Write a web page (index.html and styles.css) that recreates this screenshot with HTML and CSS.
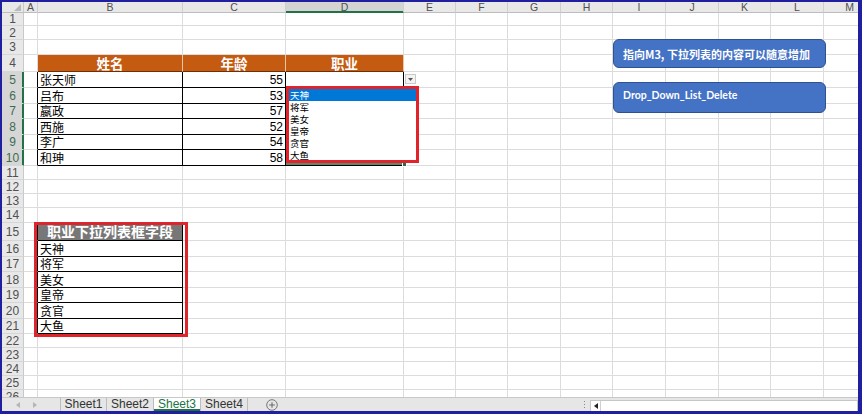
FILE: index.html
```html
<!DOCTYPE html>
<html lang="zh">
<head>
<meta charset="utf-8">
<title>Sheet3</title>
<link rel="stylesheet" href="styles.css">
</head>
<body>
<div class="frame">
  <div class="sheet">
    <div class="grid">
      <div class="corner"></div><div class="ch">A</div><div class="ch">B</div><div class="ch">C</div><div class="ch sel">D</div><div class="ch">E</div><div class="ch">F</div><div class="ch">G</div><div class="ch">H</div><div class="ch">I</div><div class="ch">J</div><div class="ch">K</div><div class="ch">L</div><div class="ch">M</div>
      <div class="rh">1</div><div class="c"></div><div class="c"></div><div class="c"></div><div class="c"></div><div class="c"></div><div class="c"></div><div class="c"></div><div class="c"></div><div class="c"></div><div class="c"></div><div class="c"></div><div class="c"></div><div class="c"></div>
      <div class="rh">2</div><div class="c"></div><div class="c"></div><div class="c"></div><div class="c"></div><div class="c"></div><div class="c"></div><div class="c"></div><div class="c"></div><div class="c"></div><div class="c"></div><div class="c"></div><div class="c"></div><div class="c"></div>
      <div class="rh">3</div><div class="c"></div><div class="c"></div><div class="c"></div><div class="c"></div><div class="c"></div><div class="c"></div><div class="c"></div><div class="c"></div><div class="c"></div><div class="c"></div><div class="c"></div><div class="c"></div><div class="c"></div>
      <div class="rh">4</div><div class="c"></div><div class="c th">姓名</div><div class="c th">年龄</div><div class="c th">职业</div><div class="c"></div><div class="c"></div><div class="c"></div><div class="c"></div><div class="c"></div><div class="c"></div><div class="c"></div><div class="c"></div><div class="c"></div>
      <div class="rh sel">5</div><div class="c edge"></div><div class="c d">张天师</div><div class="c d num">55</div><div class="c d"></div><div class="c"></div><div class="c"></div><div class="c"></div><div class="c"></div><div class="c"></div><div class="c"></div><div class="c"></div><div class="c"></div><div class="c"></div>
      <div class="rh sel">6</div><div class="c edge"></div><div class="c d">吕布</div><div class="c d num">53</div><div class="c d"></div><div class="c"></div><div class="c"></div><div class="c"></div><div class="c"></div><div class="c"></div><div class="c"></div><div class="c"></div><div class="c"></div><div class="c"></div>
      <div class="rh sel">7</div><div class="c edge"></div><div class="c d">嬴政</div><div class="c d num">57</div><div class="c d"></div><div class="c"></div><div class="c"></div><div class="c"></div><div class="c"></div><div class="c"></div><div class="c"></div><div class="c"></div><div class="c"></div><div class="c"></div>
      <div class="rh sel">8</div><div class="c edge"></div><div class="c d">西施</div><div class="c d num">52</div><div class="c d"></div><div class="c"></div><div class="c"></div><div class="c"></div><div class="c"></div><div class="c"></div><div class="c"></div><div class="c"></div><div class="c"></div><div class="c"></div>
      <div class="rh sel">9</div><div class="c edge"></div><div class="c d">李广</div><div class="c d num">54</div><div class="c d"></div><div class="c"></div><div class="c"></div><div class="c"></div><div class="c"></div><div class="c"></div><div class="c"></div><div class="c"></div><div class="c"></div><div class="c"></div>
      <div class="rh sel">10</div><div class="c edge"></div><div class="c d">和珅</div><div class="c d num">58</div><div class="c d"></div><div class="c"></div><div class="c"></div><div class="c"></div><div class="c"></div><div class="c"></div><div class="c"></div><div class="c"></div><div class="c"></div><div class="c"></div>
      <div class="rh">11</div><div class="c"></div><div class="c"></div><div class="c"></div><div class="c"></div><div class="c"></div><div class="c"></div><div class="c"></div><div class="c"></div><div class="c"></div><div class="c"></div><div class="c"></div><div class="c"></div><div class="c"></div>
      <div class="rh">12</div><div class="c"></div><div class="c"></div><div class="c"></div><div class="c"></div><div class="c"></div><div class="c"></div><div class="c"></div><div class="c"></div><div class="c"></div><div class="c"></div><div class="c"></div><div class="c"></div><div class="c"></div>
      <div class="rh">13</div><div class="c"></div><div class="c"></div><div class="c"></div><div class="c"></div><div class="c"></div><div class="c"></div><div class="c"></div><div class="c"></div><div class="c"></div><div class="c"></div><div class="c"></div><div class="c"></div><div class="c"></div>
      <div class="rh">14</div><div class="c"></div><div class="c"></div><div class="c"></div><div class="c"></div><div class="c"></div><div class="c"></div><div class="c"></div><div class="c"></div><div class="c"></div><div class="c"></div><div class="c"></div><div class="c"></div><div class="c"></div>
      <div class="rh">15</div><div class="c edge"></div><div class="c gh">职业下拉列表框字段</div><div class="c"></div><div class="c"></div><div class="c"></div><div class="c"></div><div class="c"></div><div class="c"></div><div class="c"></div><div class="c"></div><div class="c"></div><div class="c"></div><div class="c"></div>
      <div class="rh">16</div><div class="c edge"></div><div class="c d">天神</div><div class="c"></div><div class="c"></div><div class="c"></div><div class="c"></div><div class="c"></div><div class="c"></div><div class="c"></div><div class="c"></div><div class="c"></div><div class="c"></div><div class="c"></div>
      <div class="rh">17</div><div class="c edge"></div><div class="c d">将军</div><div class="c"></div><div class="c"></div><div class="c"></div><div class="c"></div><div class="c"></div><div class="c"></div><div class="c"></div><div class="c"></div><div class="c"></div><div class="c"></div><div class="c"></div>
      <div class="rh">18</div><div class="c edge"></div><div class="c d">美女</div><div class="c"></div><div class="c"></div><div class="c"></div><div class="c"></div><div class="c"></div><div class="c"></div><div class="c"></div><div class="c"></div><div class="c"></div><div class="c"></div><div class="c"></div>
      <div class="rh">19</div><div class="c edge"></div><div class="c d">皇帝</div><div class="c"></div><div class="c"></div><div class="c"></div><div class="c"></div><div class="c"></div><div class="c"></div><div class="c"></div><div class="c"></div><div class="c"></div><div class="c"></div><div class="c"></div>
      <div class="rh">20</div><div class="c edge"></div><div class="c d">贪官</div><div class="c"></div><div class="c"></div><div class="c"></div><div class="c"></div><div class="c"></div><div class="c"></div><div class="c"></div><div class="c"></div><div class="c"></div><div class="c"></div><div class="c"></div>
      <div class="rh">21</div><div class="c edge"></div><div class="c d">大鱼</div><div class="c"></div><div class="c"></div><div class="c"></div><div class="c"></div><div class="c"></div><div class="c"></div><div class="c"></div><div class="c"></div><div class="c"></div><div class="c"></div><div class="c"></div>
      <div class="rh">22</div><div class="c"></div><div class="c"></div><div class="c"></div><div class="c"></div><div class="c"></div><div class="c"></div><div class="c"></div><div class="c"></div><div class="c"></div><div class="c"></div><div class="c"></div><div class="c"></div><div class="c"></div>
      <div class="rh">23</div><div class="c"></div><div class="c"></div><div class="c"></div><div class="c"></div><div class="c"></div><div class="c"></div><div class="c"></div><div class="c"></div><div class="c"></div><div class="c"></div><div class="c"></div><div class="c"></div><div class="c"></div>
      <div class="rh">24</div><div class="c"></div><div class="c"></div><div class="c"></div><div class="c"></div><div class="c"></div><div class="c"></div><div class="c"></div><div class="c"></div><div class="c"></div><div class="c"></div><div class="c"></div><div class="c"></div><div class="c"></div>
      <div class="rh">25</div><div class="c"></div><div class="c"></div><div class="c"></div><div class="c"></div><div class="c"></div><div class="c"></div><div class="c"></div><div class="c"></div><div class="c"></div><div class="c"></div><div class="c"></div><div class="c"></div><div class="c"></div>
      <div class="rh">26</div><div class="c"></div><div class="c"></div><div class="c"></div><div class="c"></div><div class="c"></div><div class="c"></div><div class="c"></div><div class="c"></div><div class="c"></div><div class="c"></div><div class="c"></div><div class="c"></div><div class="c"></div>
    </div>

    <div class="sel-line"></div>
    <div class="fill-handle"></div>
    <div class="dd-btn"><svg width="5" height="3" viewBox="0 0 5 3"><path d="M0 0H5L2.5 3Z" fill="#555"/></svg></div>
    <ul class="dd-list">
      <li class="on">天神</li>
      <li>将军</li>
      <li>美女</li>
      <li>皇帝</li>
      <li>贪官</li>
      <li>大鱼</li>
    </ul>
    <div class="red-box"></div>
    <div class="shape s1">指向M3, 下拉列表的内容可以随意增加</div>
    <div class="shape s2">Drop_Down_List_Delete</div>
  </div>

  <div class="tabbar">
    <div class="nav">
      <svg width="4" height="6" viewBox="0 0 4 6"><path d="M4 0V6L0 3Z" fill="#b5b5b5"/></svg>
      <svg width="4" height="6" viewBox="0 0 4 6"><path d="M0 0V6L4 3Z" fill="#b5b5b5"/></svg>
    </div>
    <div class="tab first">Sheet1</div>
    <div class="tab">Sheet2</div>
    <div class="tab active">Sheet3</div>
    <div class="tab">Sheet4</div>
    <div class="add"><svg width="12" height="12" viewBox="0 0 12 12"><circle cx="6" cy="6" r="5.3" fill="none" stroke="#777" stroke-width="1"/><path d="M6 3.2V8.8M3.2 6H8.8" stroke="#666" stroke-width="1"/></svg></div>
    <div class="spacer"></div>
    <div class="split"><i></i><i></i><i></i></div>
    <div class="hscroll"><div class="larr"><svg width="4" height="6" viewBox="0 0 4 6"><path d="M4 0V6L0 3Z" fill="#222"/></svg></div></div>
  </div>
</div>
</body>
</html>
```

FILE: styles.css
```css
* { box-sizing: border-box; margin: 0; padding: 0; }
html, body { width: 862px; height: 414px; overflow: hidden; background: #fff; }
body { font-family: "Liberation Sans", "Noto Sans CJK SC", sans-serif; }

.frame {
  width: 862px;
  height: 414px;
  border: solid #1f1f9f;
  border-width: 2px 4px 3px 2px;
  display: flex;
  flex-direction: column;
  overflow: hidden;
  background: #fff;
}

.sheet { position: relative; height: 395px; flex: none; overflow: hidden; }

.grid {
  display: grid;
  width: 874px;
  grid-template-columns: 22px 14px 145px 103px 118px 52px 52px 53px 52px 53px 53px 52px 53px 52px;
  grid-template-rows: 11px 13px 14px 15px 17px 16px 16px 15px 16px 15px 16px 14px 14px 14px 15px 18px 16px 15px 16px 15px 16px 15px 14px 14px 14px 14px 14px;
}

.corner { position: relative; background: #e8e8e8; border-right: 1px solid #c9c9c9; border-bottom: 1px solid #bdbdbd; }
.corner::after {
  content: ""; position: absolute; right: 2px; bottom: 1px;
  border-left: 7px solid transparent; border-bottom: 7px solid #b8b8b8;
}

.ch {
  background: #e8e8e8; border-right: 1px solid #cfcfcf; border-bottom: 1px solid #bdbdbd;
  display: flex; align-items: center; justify-content: center;
  font-size: 10.5px; line-height: 10px; color: #505050;
}
.ch.sel { background: #d4d4d4; color: #505050; border-bottom-color: #217346; box-shadow: inset 0 -1px 0 #217346; }

.rh {
  background: #e8e8e8; border-right: 1px solid #c9c9c9; border-bottom: 1px solid #d6d6d6;
  display: flex; align-items: center; justify-content: center;
  font-size: 12px; line-height: 12px; color: #505050;
}
.rh.sel { background: #d6d6d6; color: #3f6b4f; border-right-color: #217346; box-shadow: inset -1px 0 0 #217346; }

.c {
  border-right: 1px solid #dcdcdc; border-bottom: 1px solid #dcdcdc;
  display: flex; align-items: center;
  padding: 0 2px; white-space: nowrap;
  font-size: 12px; line-height: 12px; color: #000;
}
.c.edge { border-right-color: #000; }
.c.d { border-color: #000; font-family: "Noto Sans CJK SC", sans-serif; font-size: 12px; }
.c.num { justify-content: flex-end; font-family: "Liberation Sans", sans-serif; font-size: 12px; }

.c.th {
  background: #c55a11; color: #fff; justify-content: center;
  font-family: "Noto Sans CJK SC", sans-serif; font-weight: bold; font-size: 13.5px; line-height: 14px;
  border-right-color: #eec4a6; border-bottom-color: #6b3008;
}
.c.gh {
  background: #777777; color: #fff; justify-content: center;
  font-family: "Noto Sans CJK SC", sans-serif; font-weight: bold; font-size: 14px; line-height: 15px;
  border-right-color: #000; border-bottom-color: #000;
}

.sel-line { position: absolute; left: 284px; top: 161px; width: 118px; height: 2px; background: #5e8a6c; }
.fill-handle { position: absolute; left: 400px; top: 160px; width: 5px; height: 5px; background: #217346; border: 1px solid #fff; }

.dd-btn {
  position: absolute; left: 403px; top: 72px; width: 11px; height: 10px;
  background: #f3f3f3; border: 1px solid #c9c9c9;
  display: flex; align-items: center; justify-content: center;
}

.dd-list {
  position: absolute; left: 284px; top: 84px; width: 133px; height: 77px;
  border: 3px solid #e2232b; background: #fff; list-style: none;
  font-family: "Noto Sans CJK SC", sans-serif; font-size: 9.5px; color: #000;
}
.dd-list li { height: 12px; line-height: 10px; padding-left: 1px; display: flex; align-items: center; overflow: hidden; }
.dd-list li.on { background: #0078d7; color: #fff; }

.red-box {
  position: absolute; left: 32px; top: 220px; width: 154px; height: 115px;
  border: 3px solid #df252b;
}

.shape {
  position: absolute; left: 611px; width: 213px;
  background: #4472c4; border: 1px solid #2f528f; border-radius: 6px;
  color: #fff; font-weight: bold; font-size: 11px; line-height: 12px;
  padding-left: 9px; display: flex; align-items: center;
  font-family: "Noto Sans CJK SC", sans-serif;
}
.s1 { top: 37px; height: 29px; }
.s2 { top: 80px; height: 31px; padding-bottom: 5px; font-family: Lato, "Liberation Sans", sans-serif; font-size: 10.5px; }

.tabbar {
  height: 14px; flex: none; display: flex; align-items: stretch;
  background: #e6e6e6; border-top: 1px solid #c8c8c8;
  font-size: 12px; line-height: 13px; color: #333;
}
.nav { width: 58px; display: flex; align-items: center; gap: 13px; padding-left: 14px; }
.tab { width: 47px; border-right: 1px solid #bdbdbd; text-align: center; }
.tab.first { border-left: 1px solid #bdbdbd; }
.tab.active { background: #fff; color: #217346; box-shadow: inset 0 -2px 0 #217346; }
.add { width: 48px; display: flex; align-items: center; justify-content: center; }
.spacer { flex: 1; }
.split { width: 12px; display: flex; flex-direction: column; align-items: center; justify-content: center; gap: 2px; }
.split i { width: 1px; height: 1px; background: #888; }
.hscroll {
  width: 268px; margin-top: 2px; background: #fff; border: 1px solid #c6c6c6; border-bottom: none;
  display: flex; align-items: stretch;
}
.larr { width: 10px; border-right: 1px solid #d0d0d0; display: flex; align-items: center; justify-content: center; }
```
